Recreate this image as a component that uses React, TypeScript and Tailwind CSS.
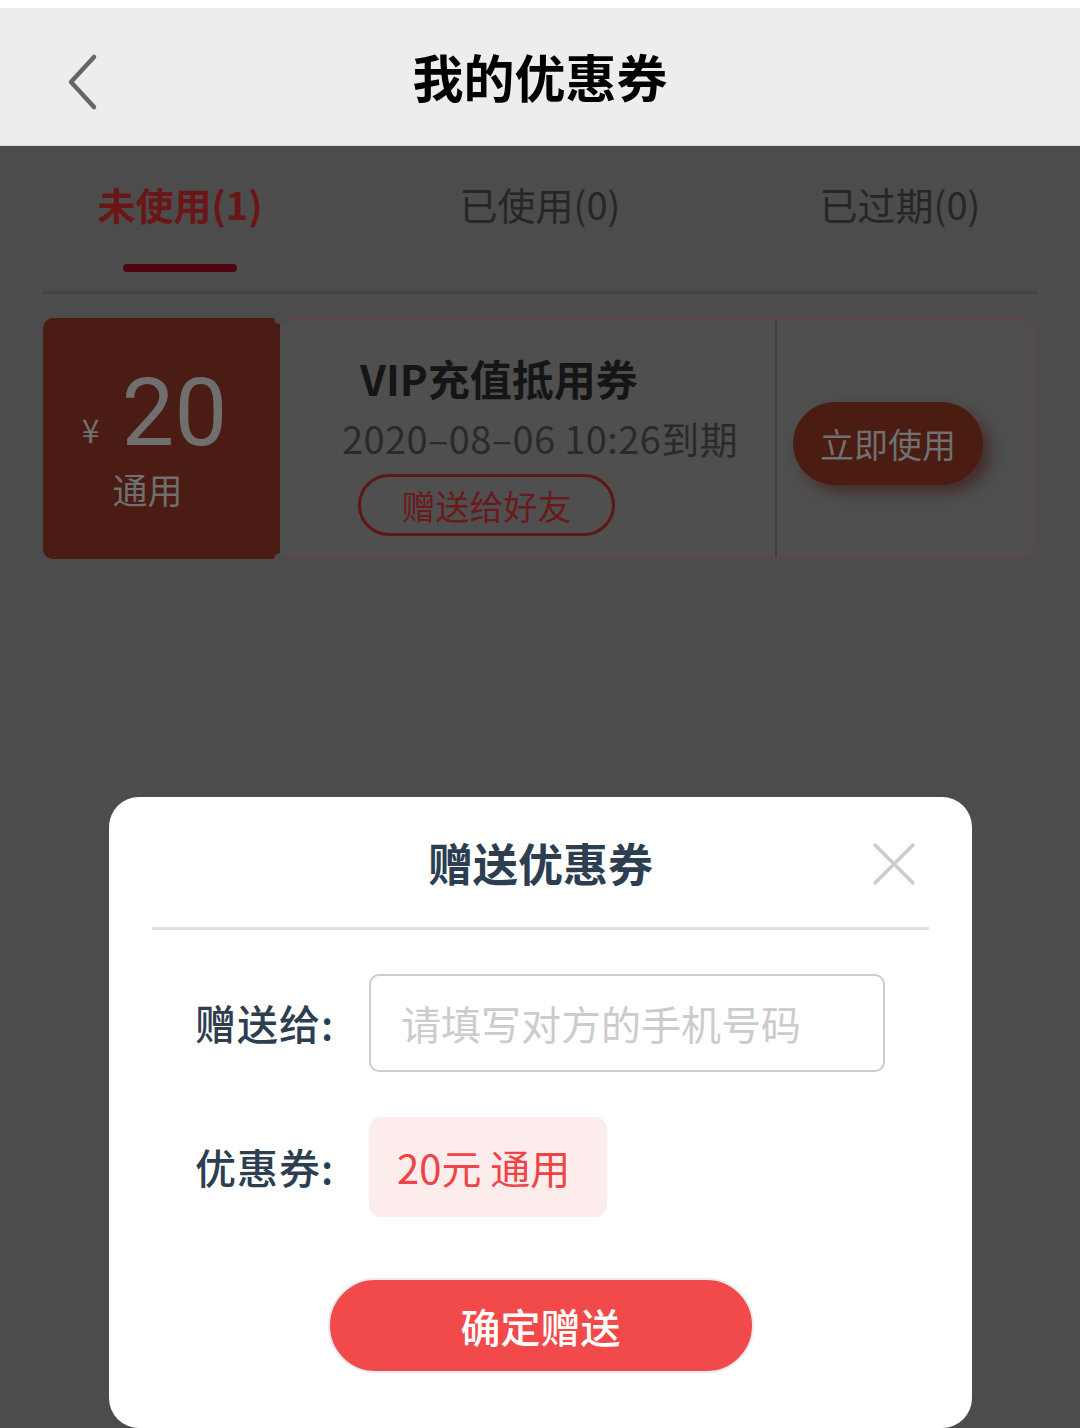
export default function App() {
    return (
        <div className="relative w-[1080px] h-[1428px] overflow-hidden bg-[#4c4c4c] font-['Noto_Sans_CJK_SC','Noto_Sans',sans-serif]">
            <div className="h-[8px] bg-white" />
            <header className="relative flex h-[138px] items-center justify-center bg-[#ededed] border-b border-[#d6d6d6]">
                <button className="absolute left-[60px] top-[40px] p-1" aria-label="返回">
                    <svg width="36" height="60" viewBox="0 0 36 60" fill="none">
                        <path d="M30 5 L7 30 L30 55" stroke="#666" strokeWidth="4.5" strokeLinecap="round" strokeLinejoin="round" />
                    </svg>
                </button>
                <h1 className="text-[51px] font-bold text-black leading-none">我的优惠券</h1>
            </header>

            <nav className="grid grid-cols-3 h-[145px]">
                <div className="flex flex-col items-center pt-[34px]">
                    <span className="text-[38px] leading-[48px] font-bold text-[#6a1616]">未使用(1)</span>
                    <span className="mt-[36px] h-[8px] w-[114px] rounded-full bg-[#4b0610]" />
                </div>
                <div className="flex flex-col items-center pt-[34px]">
                    <span className="text-[38px] leading-[48px] text-[#262626]">已使用(0)</span>
                </div>
                <div className="flex flex-col items-center pt-[34px]">
                    <span className="text-[38px] leading-[48px] text-[#262626]">已过期(0)</span>
                </div>
            </nav>
            <div className="mx-[42px] h-[3px] bg-[#454545]" />

            <section className="relative mx-[43px] mt-[24px] flex h-[241px] w-[992px]">
                <div className="flex w-[237px] flex-col items-center justify-center rounded-l-[10px] bg-[#4a1c13] pr-[14px]">
                    <div className="flex items-end">
                        <span className="mb-[14px] mr-[22px] text-[32px] leading-none text-[#6f6f6f]">¥</span>
                        <span className="text-[94px] leading-[92px] text-[#6f6f6f] font-['Roboto','Noto_Sans',sans-serif]">20</span>
                    </div>
                    <span className="mt-[8px] mr-[14px] text-[35px] leading-[44px] text-[#6f6f6f]">通用</span>
                </div>
                <div className="flex flex-1 rounded-r-[12px] border-2 border-l-0 border-[#594846] bg-[#4f4f4f]">
                    <div className="flex w-[495px] flex-col items-start pl-[62px] pt-[32px]">
                        <span className="ml-[18px] text-[42px] leading-[52px] font-semibold text-[#151515]">VIP充值抵用券</span>
                        <span className="mt-[10px] text-[38px] leading-[48px] tracking-[0.4px] text-[#2a2a2a]">2020–08–06 10:26到期</span>
                        <span className="ml-[16px] mt-[12px] flex h-[62px] w-[257px] items-center justify-center rounded-full border-[3px] border-[#5e1717] text-[34px] text-[#6a1a1a]">赠送给好友</span>
                    </div>
                    <div className="w-[2px] bg-[#3e3e3e]" />
                    <div className="flex flex-1 items-center pl-[16px] pt-[10px]">
                        <span className="flex h-[83px] w-[190px] items-center justify-center rounded-full bg-[#4a1c12] text-[34px] text-[#707070] shadow-[8px_8px_14px_rgba(60,20,15,0.55)]">立即使用</span>
                    </div>
                </div>
                <span className="absolute left-[231px] top-[-6px] h-[12px] w-[12px] rounded-full bg-[#4c4c4c]" />
                <span className="absolute left-[231px] bottom-[-6px] h-[12px] w-[12px] rounded-full bg-[#4c4c4c]" />
            </section>

            <div className="absolute left-[109px] top-[797px] h-[631px] w-[863px] rounded-[30px] bg-white">
                <div className="relative flex h-[130px] items-center justify-center">
                    <h2 className="text-[45px] font-bold leading-none text-[#2c3e50]">赠送优惠券</h2>
                    <button className="absolute right-[56px] top-[45px]" aria-label="关闭">
                        <svg width="44" height="44" viewBox="0 0 44 44" fill="none">
                            <path d="M3 3 L41 41 M41 3 L3 41" stroke="#cccccc" strokeWidth="3.5" strokeLinecap="round" />
                        </svg>
                    </button>
                </div>
                <div className="mx-[43px] h-[3px] bg-[#e0e0e0]" />

                <div className="mt-[44px] flex items-center pl-[86px]">
                    <span className="w-[174px] text-[41px] font-medium tracking-[1px] text-[#2c3e50]">赠送给:</span>
                    <input
                        className="h-[98px] w-[516px] rounded-[10px] border-2 border-[#cccccc] px-[30px] text-[40px] outline-none placeholder:text-[#cccccc]"
                        placeholder="请填写对方的手机号码"
                    />
                </div>
                <div className="mt-[45px] flex items-center pl-[86px]">
                    <span className="w-[174px] text-[41px] font-medium tracking-[1px] text-[#2c3e50]">优惠券:</span>
                    <span className="flex h-[100px] w-[238px] items-center rounded-[12px] bg-[#fcecec] pl-[28px] text-[40px] text-[#ef4444]">20元&nbsp;通用</span>
                </div>
                <div className="mt-[61px] flex justify-center">
                    <button className="h-[95px] w-[426px] rounded-full border-2 border-[#e8eaef] bg-[#f24a4a] text-[40px] font-medium text-white">确定赠送</button>
                </div>
            </div>
        </div>
    );
}
